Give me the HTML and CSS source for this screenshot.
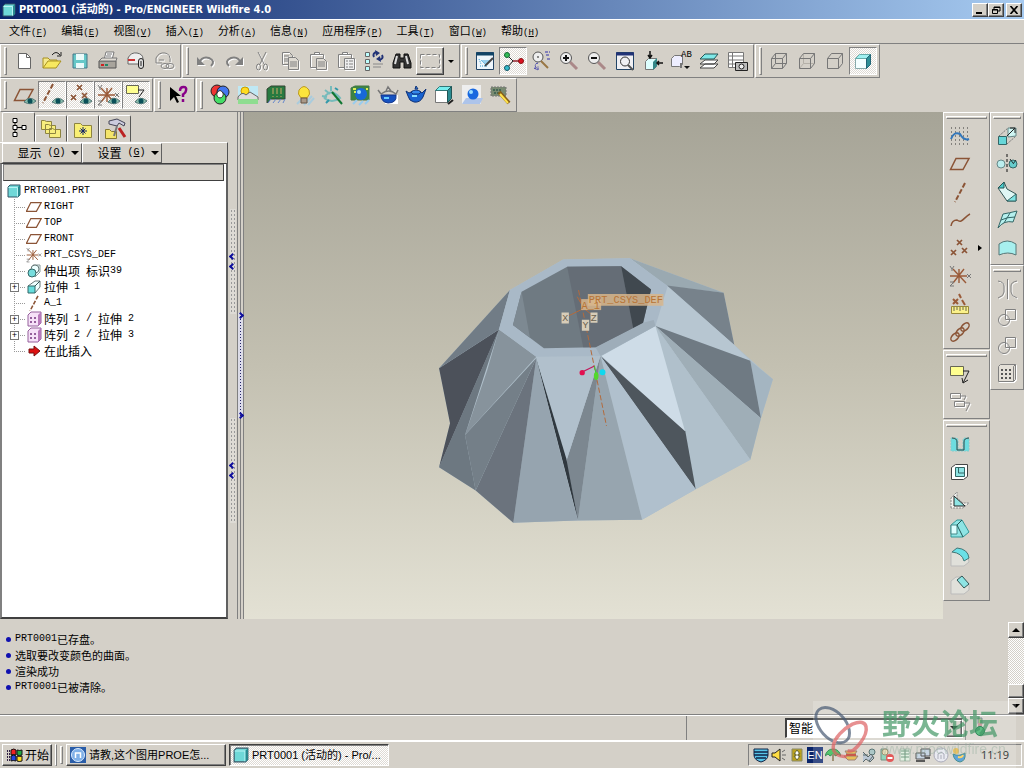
FILE: index.html
```html
<!DOCTYPE html>
<html lang="zh-CN">
<head>
<meta charset="utf-8">
<title>PRT0001 (活动的) - Pro/ENGINEER Wildfire 4.0</title>
<link rel="stylesheet" href="styles.css">
</head>
<body>
<svg class="sprite" aria-hidden="true">
  <symbol id="part" viewBox="0 0 14 14"><path d="M1 3l2-2h10v10l-2 2H1z" fill="#6fd8d8" stroke="#356" /><path d="M1.500 3.500h9v9" fill="none" stroke="#b8f4f4"/><path d="M11 3l2-2v10l-2 2z" fill="#288a90"/></symbol>
  <symbol id="plane" viewBox="0 0 24 24"><path d="M8 6.500h13l-6 11H2.500z" fill="none" stroke="#8b5436" stroke-width="1.500"/></symbol>
  <symbol id="axis" viewBox="0 0 24 24"><path d="M17 3L7 22" fill="none" stroke="#8b5436" stroke-width="2" stroke-dasharray="5 2"/></symbol>
  <symbol id="points" viewBox="0 0 24 24"><path d="M9 4l5 5m0-5l-5 5M3 14l5 5m0-5l-5 5M14 12l5 5m0-5l-5 5" fill="none" stroke="#8b5436" stroke-width="1.700"/></symbol>
  <symbol id="csys" viewBox="0 0 24 24"><path d="M2 12h17M5 5l13 14M16 5L5 19M11 5v14" fill="none" stroke="#9a5a38" stroke-width="1.400"/><path d="M2 2l2 3 2-3M4 5v2M19 10l4 4m0-4l-4 4M2 18h4l-4 4h4" fill="none" stroke="#777"/></symbol>
  <symbol id="eye" viewBox="0 0 12 8"><path d="M0 5Q5-2 12 4 7 9 0 5z" fill="#8ba" stroke="#577"/><circle cx="6" cy="4" r="2.500" fill="#0a5058"/></symbol>
  <symbol id="pattern" viewBox="0 0 16 16"><path d="M2 4l3-3h10v11l-3 3H2z" fill="#f6e2f8" stroke="#95609c"/><path d="M12 4l3-3v11l-3 3z" fill="#b87abb"/><path d="M5 6v8M9 6v8" stroke="#95609c" stroke-width="2" stroke-dasharray="2 2"/></symbol>
  <symbol id="note" viewBox="0 0 24 24"><path d="M2.500 4.500h13v9h-13z" fill="#ffff90" stroke="#665"/><path d="M15 9h6l-6 12m-1-5l1 5 5-3" fill="none" stroke="#222"/></symbol>
</svg>

<header class="title">
  <svg class="app" viewBox="0 0 14 14"><use href="#part"/></svg>
  <h1>PRT0001 (活动的) - Pro/ENGINEER Wildfire 4.0</h1>
  <div class="winbtns">
    <button aria-label="最小化"><svg viewBox="0 0 10 8"><path d="M1 7h6" stroke="#000" stroke-width="2"/></svg></button>
    <button aria-label="还原"><svg viewBox="0 0 10 8"><path d="M3 3V1h6v4H7M3 1.500h6M1.500 3.500h5v4h-5zM1 4h6" fill="none" stroke="#000"/></svg></button>
    <button class="close" aria-label="关闭"><svg viewBox="0 0 10 8"><path d="M1.500 0l7 8m0-8l-7 8" stroke="#000" stroke-width="1.700"/></svg></button>
  </div>
</header>

<nav class="menu">
  <button>文件<small>(<u>F</u>)</small></button><button>编辑<small>(<u>E</u>)</small></button><button>视图<small>(<u>V</u>)</small></button><button>插入<small>(<u>I</u>)</small></button><button>分析<small>(<u>A</u>)</small></button><button>信息<small>(<u>N</u>)</small></button><button>应用程序<small>(<u>P</u>)</small></button><button>工具<small>(<u>T</u>)</small></button><button>窗口<small>(<u>W</u>)</small></button><button>帮助<small>(<u>H</u>)</small></button>
</nav>

<div class="bar">
  <div class="group">
    <button class="tb" aria-label="新建"><svg viewBox="0 0 24 24"><path d="M6.500 4.500h8l4 4v11h-12z" fill="#fff" stroke="#666"/><path d="M14.500 4.500v4h4" stroke="#666"/></svg></button>
    <button class="tb" aria-label="打开"><svg viewBox="0 0 24 24"><path d="M3 19V9h5l2 2h7v2" fill="#f5e98c" stroke="#a89020"/><path d="M3 19l5-7h13l-5 7z" fill="#f8e860" stroke="#a89020"/><path d="M12 6q4-5 8 0m1-3v4h-4" stroke="#222"/></svg></button>
    <button class="tb" aria-label="保存"><svg viewBox="0 0 24 24"><path d="M5 5h14v14H5z" fill="#66c8c8" stroke="#478"/><path d="M8 5h8v6H8zM8 14h8v5H8z" fill="#eafafa" stroke="none"/></svg></button>
    <button class="tb" aria-label="打印"><svg viewBox="0 0 24 24"><path d="M8 11l2-8h8l-2 8" fill="#fff" stroke="#777"/><path d="M3 12h17v7H3z" fill="#a8a49c" stroke="#555"/><path d="M3 12l3-3h15l-1 3z" fill="#e0dcd4" stroke="#777"/><path d="M11 5h5M10 7h5" stroke="#777"/><path d="M5 16h3" stroke="#c22" stroke-width="2"/><path d="M9 16h3" stroke="#286" stroke-width="2"/></svg></button>
    <button class="tb" aria-label="发送邮件"><svg viewBox="0 0 24 24"><path d="M4 15V9q3-6 9-5 6 1 6 6v5z" fill="#eee" stroke="#666"/><path d="M4 11h7" stroke="#c33" stroke-width="2"/><rect x="14.500" y="9.500" width="5" height="10" rx="2.500" fill="#ddd" stroke="#222"/><path d="M17 12v5" stroke="#222"/></svg></button>
    <button class="tb" aria-label="发送链接"><svg class="gray" viewBox="0 0 24 24"><path d="M4 14V9q3-6 9-5 6 1 5 9M4 14h6M7 11h5"/><ellipse cx="13" cy="17" rx="4" ry="2.500"/><ellipse cx="18" cy="17" rx="4" ry="2.500"/></svg></button>
  </div>
  <div class="group">
    <button class="tb" aria-label="撤消"><svg class="gray" viewBox="0 0 24 24"><path d="M5 14q3-7 10-5 7 3 2 8" stroke-width="2"/><path d="M3 8v8h8z" class="gf"/></svg></button>
    <button class="tb" aria-label="重做"><svg class="gray" viewBox="0 0 24 24"><path d="M19 14q-3-7-10-5-7 3-2 8" stroke-width="2"/><path d="M21 8v8h-8z" class="gf"/></svg></button>
    <button class="tb" aria-label="剪切"><svg class="gray" viewBox="0 0 24 24"><path d="M8 3l6 12M16 3l-6 12"/><ellipse cx="8.500" cy="18" rx="2" ry="3"/><ellipse cx="15.500" cy="18" rx="2" ry="3"/></svg></button>
    <button class="tb" aria-label="复制"><svg class="gray" viewBox="0 0 24 24"><path d="M4.500 3.500h7l3 3v9h-10zM6 7h5M6 10h5M6 12h5"/><path d="M10.500 8.500h7l3 3v9h-10zM12 13h7M12 15h7M12 17h7" fill="#dedad2"/></svg></button>
    <button class="tb" aria-label="粘贴"><svg class="gray" viewBox="0 0 24 24"><path d="M4.500 5.500h13v13h-13zM8.500 5V3.500h5V5"/><path d="M10.500 9.500h7l3 3v8h-10zM12 13h7M12 15h7M12 17h7" fill="#dedad2"/></svg></button>
    <button class="tb" aria-label="选择性粘贴"><svg class="gray" viewBox="0 0 24 24"><path d="M4.500 5.500h13v13h-13zM8.500 5V3.500h5V5"/><path d="M10.500 9.500h10v11h-10zM12 12h2M15 12h4M12 15h2M15 15h4M12 18h2M15 18h4" fill="#eee"/></svg></button>
    <button class="tb" aria-label="再生"><svg viewBox="0 0 24 24"><path d="M3.500 3.500h4v4h-4zM3.500 10.500h4v4h-4zM3.500 17.500h4v4h-4z" fill="#bff" stroke="#666"/><path d="M12 8q-2-4 3-5m5 3q2 4-3 5" stroke="#237" stroke-width="2"/><path d="M13 1l5 3-4 3zM19 13l-5-3 4-3z" fill="#237" stroke="none"/><path d="M11 15h10M11 18h8" stroke="#888"/></svg></button>
    <button class="tb" aria-label="查找"><svg viewBox="0 0 24 24"><path d="M6 5h4v4h4V5h4l3 9v5h-7v-6h-4v6H3v-5z" fill="#333" stroke="#111"/><path d="M7 7l-2 8M16 7l2 8" stroke="#ddd" stroke-width="2"/></svg></button>
    <button class="tb raised" aria-label="选择框"><svg class="gray" viewBox="0 0 24 24"><path d="M2.500 5.500h19v13h-19z" stroke-dasharray="4 2"/></svg></button>
    <button class="drop" aria-label="更多"><i></i></button>
  </div>
  <div class="group">
    <button class="tb" aria-label="重画"><svg viewBox="0 0 24 24"><path d="M3.500 3.500h17v17h-17z" fill="#eef6fc" stroke="#246"/><path d="M3 5h18" stroke="#146" stroke-width="3"/><path d="M8 11l5 5 5-5" fill="#9ad0ee" stroke="#7bd"/><path d="M12 17l8-8" stroke="#444" stroke-width="2"/><path d="M6 10l2 5M7 17h7" stroke="#39c" stroke-dasharray="1 1"/></svg></button>
    <button class="tb on" aria-label="旋转中心"><svg viewBox="0 0 24 24"><path d="M6 6l6 6-6 7M12 12h9" stroke="#222"/><path d="M12 12h9" stroke="#c23"/><circle cx="6" cy="6" r="2.500" fill="#3b5" stroke="#163"/><circle cx="6" cy="19" r="2.500" fill="#3bc" stroke="#156"/><circle cx="20" cy="12" r="2.500" fill="#d12" stroke="#811"/></svg></button>
    <button class="tb" aria-label="定向模式"><svg viewBox="0 0 24 24"><circle cx="9" cy="8" r="5" fill="#eee" stroke="#555"/><path d="M8.500 8h1" stroke="#222" stroke-width="2"/><path d="M12 12l7 7" stroke="#974" stroke-width="2"/><path d="M16 3h5M17 6h4M18 10h3M9 14q-5 1-1 6m-3-1l4 2v-4" stroke="#33a" stroke-dasharray="3 1"/></svg></button>
    <button class="tb" aria-label="放大"><svg viewBox="0 0 24 24"><path d="M13 13l7 7" stroke="#a88" stroke-width="3"/><circle cx="9" cy="9" r="5.500" fill="#eee" stroke="#555"/><path d="M6 9h6M9 6v6" stroke="#111" stroke-width="2"/></svg></button>
    <button class="tb" aria-label="缩小"><svg viewBox="0 0 24 24"><path d="M13 13l7 7" stroke="#a88" stroke-width="3"/><circle cx="9" cy="9" r="5.500" fill="#eee" stroke="#555"/><path d="M6 9h6" stroke="#111" stroke-width="2"/></svg></button>
    <button class="tb" aria-label="重新调整"><svg viewBox="0 0 24 24"><path d="M3.500 3.500h17v17h-17z" fill="#f0f0f4" stroke="#246"/><path d="M3 5h18" stroke="#237" stroke-width="3"/><circle cx="12" cy="12.500" r="4.500" stroke="#333"/><path d="M15 16l5 5" stroke="#555" stroke-width="2"/></svg></button>
    <button class="tb" aria-label="重定向"><svg viewBox="0 0 24 24"><path d="M4.500 12.500l3-3h8v8l-3 3h-8z" fill="#dff" stroke="#777"/><path d="M12 13l4-4v8l-4 4z" fill="#388"/><path d="M9 2v6M7 6l2 3 2-3M22 14h-6m2-2l-2 2 2 2" stroke="#111" stroke-width="1.500"/></svg></button>
    <button class="tb" aria-label="命名视图"><svg viewBox="0 0 24 24"><path d="M2.500 9.500l3-3h8v9l-3 2h-8z" fill="#eef" stroke="#777"/><text x="12" y="8" class="ab">AB</text><path d="M12 14v5" stroke="#777" stroke-width="2"/><path d="M15 17h6l-3 3z" fill="#111" stroke="none"/></svg></button>
    <button class="tb" aria-label="图层"><svg viewBox="0 0 24 24"><path d="M3 19l5-4h13l-4 4zM3 15l5-4h13l-4 4z" fill="#fff" stroke="#444"/><path d="M3 10l5-5h13l-4 5z" fill="#7fe8e8" stroke="#255"/></svg></button>
    <button class="tb" aria-label="视图管理器"><svg viewBox="0 0 24 24"><path d="M3.500 3.500h15v15h-15zM3.500 7h15M3.500 11h15M3.500 15h15M7.500 3v15" fill="#fff" stroke="#777"/><path d="M10.500 13.500h12v8h-12z" fill="#bbb" stroke="#222"/><circle cx="16.500" cy="17.500" r="2.500" fill="#eee" stroke="#222"/></svg></button>
  </div>
  <div class="group">
    <button class="tb" aria-label="线框"><svg viewBox="0 0 24 24"><path d="M4.500 9.500h11v10h-11zM8.500 4.500h11v10h-11zM4.500 9.500l4-5M15.500 9.500l4-5M15.500 19.500l4-5M4.500 19.500l4-5" stroke="#777"/></svg></button>
    <button class="tb" aria-label="隐藏线"><svg viewBox="0 0 24 24"><path d="M8.500 5v9.500h11M4.500 19.500l4-5" stroke="#b4b0a8"/><path d="M4.500 9.500h11v10h-11zM4.500 9.500l4-5h11v10l-4 5M15.500 9.500l4-5" stroke="#777"/></svg></button>
    <button class="tb" aria-label="无隐藏线"><svg viewBox="0 0 24 24"><path d="M4.500 9.500h11v10h-11zM4.500 9.500l4-5h11v10l-4 5M15.500 9.500l4-5" stroke="#777"/></svg></button>
    <button class="tb on" aria-label="着色"><svg viewBox="0 0 24 24"><path d="M4.500 9.500h11v10h-11z" fill="#f4ffff" stroke="#8aa"/><path d="M4.500 9.500l4-4h11l-4 4z" fill="#9ff0f0" stroke="#6aa"/><path d="M15.500 9.500l4-4v10l-4 4z" fill="#2f8f96" stroke="#267"/></svg></button>
  </div>
</div>

<div class="bar">
  <div class="group">
    <button class="tb" aria-label="基准平面显示"><svg viewBox="0 0 24 24"><use href="#plane"/><use href="#eye" x="12" y="14" width="12" height="8"/></svg></button>
    <button class="tb on" aria-label="基准轴显示"><svg viewBox="0 0 24 24"><use href="#axis" x="-4" y="-2" width="24" height="24"/><use href="#eye" x="12" y="14" width="12" height="8"/></svg></button>
    <button class="tb on" aria-label="基准点显示"><svg viewBox="0 0 24 24"><use href="#points" y="-2" width="24" height="24"/><use href="#eye" x="12" y="14" width="12" height="8"/></svg></button>
    <button class="tb on" aria-label="坐标系显示"><svg viewBox="0 0 24 24"><use href="#csys" width="24" height="24"/><use href="#eye" x="12" y="14" width="12" height="8"/></svg></button>
    <button class="tb on" aria-label="注释显示"><svg viewBox="0 0 24 24"><path d="M2.500 2.500h12v8h-12z" fill="#ffff90" stroke="#665"/><path d="M14 7h6l-5 7" stroke="#222"/><use href="#eye" x="11" y="14" width="12" height="8"/></svg></button>
  </div>
  <div class="group">
    <button class="tb" aria-label="上下文帮助"><svg viewBox="0 0 24 24"><path d="M4 4v14l4-4 3 6 2-1-3-6h5z" fill="#000" stroke="none"/><path d="M14 8q0-4 3.500-4T20 7.500q0 2-3 4V14m0 2v3" stroke="#808" stroke-width="2.500"/></svg></button>
  </div>
  <div class="group">
    <button class="tb" aria-label="颜色和外观"><svg viewBox="0 0 24 24"><circle cx="9" cy="8" r="6" fill="#e33" stroke="#222"/><circle cx="15" cy="9" r="6" fill="#47e" stroke="#222"/><circle cx="12" cy="15" r="6" fill="#4d6" stroke="#222"/><path d="M9 10q3-5 6 0 1 4-3 5-4-1-3-5z" fill="#fff" stroke="#333"/></svg></button>
    <button class="tb" aria-label="场景"><svg viewBox="0 0 24 24"><path d="M2 3h20v18H2z" fill="#bfe8f4" stroke="none"/><circle cx="9" cy="8" r="4" fill="#fd2" stroke="#c90"/><path d="M2 14q4-6 8-2l4-3 8 5v3H2z" fill="#ddd" stroke="#666"/><path d="M2 16h20v5H2z" fill="#8fdd90" stroke="none"/></svg></button>
    <button class="tb" aria-label="房间"><svg viewBox="0 0 24 24"><path d="M3 6l4-3h14v13H7l-4 4z" fill="#287a40" stroke="#343"/><path d="M9 5v9M13 5v9M17 5v9M8 8h12" stroke="#ca6" stroke-dasharray="2 2"/><path d="M4 20l3-4M9 20l3-4M14 20l3-4M19 20l2-4" stroke="#68c"/></svg></button>
    <button class="tb" aria-label="光源"><svg viewBox="0 0 24 24"><path d="M12 22l8-9M16 22l6-7M5 21l5-5" stroke="#acd" stroke-width="2"/><path d="M9 15q-4-4-2-8 5-7 10 0 2 4-2 8z" fill="#fbe53c" stroke="#b92"/><path d="M9 15h6v5H9z" fill="#a98" stroke="#654"/></svg></button>
    <button class="tb" aria-label="效果"><svg viewBox="0 0 24 24"><path d="M4 15q7-11 16 0-8 6-16 0M5 7l5 4M11 3v5M2 13l5 1" stroke="#7bb" stroke-width="2"/><path d="M12 9l10 12" stroke="#173" stroke-width="2"/><path d="M15 5l3 2M6 20l3-3" stroke="#39a" stroke-width="2"/></svg></button>
    <button class="tb" aria-label="渲染房间"><svg viewBox="0 0 24 24"><path d="M3 5l4-2h14v14H3z" fill="#3c8444" stroke="#474"/><path d="M5 21l4-4M11 22l4-4M17 21l4-4" stroke="#9ce" stroke-width="2"/><circle cx="13" cy="11" r="6" fill="#1868d8" stroke="none"/><circle cx="11" cy="9" r="2" fill="#9df" stroke="none"/><path d="M5 6h3M6 9h2M18 6h2" stroke="#de5" stroke-width="2"/></svg></button>
    <button class="tb" aria-label="渲染设置"><svg viewBox="0 0 24 24"><path d="M9 12h13v9H9z" fill="#fff" stroke="none"/><path d="M5 11q8-6 15 0l2-4M5 11l-3-4M10 8l2-4 3 4" fill="#e4e0da" stroke="#777" stroke-width="1.500"/><path d="M5 12h15q1 8-8 8-7-1-7-8z" fill="#1551c0" stroke="#138"/><path d="M8 15h5" stroke="#6cf" stroke-width="2"/></svg></button>
    <button class="tb" aria-label="渲染窗口"><svg viewBox="0 0 24 24"><path d="M5 10q8-5 13 0l4-4-3 8q-3 6-9 5-5-1-6-6L2 8z" fill="#1862d0" stroke="#137"/><path d="M7 9q5-4 10 0l-2 2H9z" fill="#38e" stroke="#137"/><path d="M11 6l1-3 2 3z" fill="#38e" stroke="#137"/><path d="M8 13h5" stroke="#8df" stroke-width="2"/></svg></button>
    <button class="tb" aria-label="模型编辑"><svg viewBox="0 0 24 24"><path d="M3.500 7.500h12v12h-12z" fill="#fff" stroke="#777"/><path d="M3.500 7.500l4-4h12l-4 4z" fill="#7ee" stroke="#377"/><path d="M15.500 7.500l4-4v12l-4 4z" fill="#2b8b90" stroke="#255"/><path d="M16 21l5-4" stroke="#222" stroke-width="2"/></svg></button>
    <button class="tb" aria-label="透视图"><svg viewBox="0 0 24 24"><path d="M2 2h19v19H2z" fill="#eee" stroke="none"/><path d="M2 21l4-6h17l-3 6z" fill="#adc4ea" stroke="none"/><circle cx="13" cy="11" r="5.500" fill="#1868e0" stroke="none"/><circle cx="11" cy="9" r="2" fill="#9df" stroke="none"/></svg></button>
    <button class="tb" aria-label="照片渲染"><svg viewBox="0 0 24 24"><path d="M3 4h15v9H3z" fill="#788a70" stroke="#777" stroke-dasharray="2 1"/><path d="M5 7h9M6 10h9" stroke="#465" stroke-width="2" stroke-dasharray="2 1"/><path d="M11 9l10 11" stroke="#876018" stroke-width="4"/><path d="M12 11l8 9" stroke="#ffe34c" stroke-width="2"/></svg></button>
  </div>
</div>

<main class="work">
  <aside class="nav">
    <div class="tabs">
      <button class="tab sel" aria-label="模型树"><svg viewBox="0 0 24 24"><path d="M6 3.500h4v4H6zM6 10.500h4v4H6zM15 10.500h4v4h-4zM6 17.500h4v4H6z" fill="#fff" stroke="#000"/><path d="M8 7.500v3m0 4v3M10 12.500h5" stroke="#000"/></svg></button>
      <button class="tab" aria-label="文件夹浏览器"><svg viewBox="0 0 24 24"><path d="M2.500 3.500h3l2 1h5v8h-10zM6.500 7.500h3l2 1h5v8h-10zM10.500 11.500h3l2 1h6v8h-11z" fill="#f7ee7d" stroke="#8d8440"/></svg></button>
      <button class="tab" aria-label="收藏夹"><svg viewBox="0 0 24 24"><path d="M3.500 6.500h6l2 2h9v12h-17z" fill="#f9ef74" stroke="#8d8440"/><path d="M12 10v8M8 14h8M9.500 11.500l5 5m0-5l-5 5" stroke="#126"/></svg></button>
      <button class="tab" aria-label="连接"><svg viewBox="0 0 24 24"><path d="M2.500 12.500h4l2 2h5v7h-11z" fill="#f4e56b" stroke="#887a30"/><path d="M6 4l8-2 8 4-1 3-5-3-2 3-8-2z" fill="#ccd" stroke="#445"/><path d="M14 9l-3 10" stroke="#777" stroke-width="2"/><path d="M16 11l6 9" stroke="#b22" stroke-width="3"/></svg></button>
    </div>
    <div class="opts">
      <button>显示<small> (<u>O</u>)</small><i></i></button><button>设置<small> (<u>G</u>)</small><i></i></button>
    </div>
    <div class="treebox">
      <div class="treehead"></div>
      <div class="tree">
        <div class="root"><svg viewBox="0 0 14 14"><use href="#part"/></svg><small>PRT0001.PRT</small></div>
        <ul>
          <li><svg viewBox="2 2 20 20"><use href="#plane" width="24" height="24"/></svg><small>RIGHT</small></li>
          <li><svg viewBox="2 2 20 20"><use href="#plane" width="24" height="24"/></svg><small>TOP</small></li>
          <li><svg viewBox="2 2 20 20"><use href="#plane" width="24" height="24"/></svg><small>FRONT</small></li>
          <li><svg viewBox="1 1 23 22"><use href="#csys" width="24" height="24"/></svg><small>PRT_CSYS_DEF</small></li>
          <li><svg viewBox="0 0 16 16"><path d="M7 2h7v7l-5 5" fill="#eff" stroke="#899"/><circle cx="9" cy="6" r="4" fill="#eff" stroke="#677"/><circle cx="6" cy="10" r="4" fill="#7dd" stroke="#366"/></svg>伸出项<small> </small>标识<small>39</small></li>
          <li><button class="exp" aria-label="展开">+</button><svg viewBox="0 0 16 16"><path d="M2 7l7-5h5v6l-5 6" fill="#eff" stroke="#677"/><path d="M9 7l5-5" stroke="#355"/><path d="M2 7h7v7H2z" fill="#6dd" stroke="#366"/></svg>拉伸<small> 1</small></li>
          <li><svg viewBox="2 2 20 20"><use href="#axis" width="24" height="24"/></svg><small>A_1</small></li>
          <li><button class="exp" aria-label="展开">+</button><svg viewBox="0 0 16 16"><use href="#pattern"/></svg>阵列<small> 1 / </small>拉伸<small> 2</small></li>
          <li><button class="exp" aria-label="展开">+</button><svg viewBox="0 0 16 16"><use href="#pattern"/></svg>阵列<small> 2 / </small>拉伸<small> 3</small></li>
          <li><svg viewBox="0 0 16 16"><path d="M3 6h5V3l6 5-6 5v-3H3z" fill="#d11" stroke="#711"/></svg>在此插入</li>
        </ul>
      </div>
    </div>
  </aside>
  <div class="sash">
    <div class="grab"><b></b><b></b></div>
    <div class="grab"><b></b><b></b></div>
  </div>
  <div class="split"><div class="pull"><b></b><b></b></div></div>

  <section class="view">
    <svg viewBox="-531 -384 2100 1521" role="img" aria-label="PRT0001">
      <path fill="#b0c0cb" d="M428 58L628 54 910 158 942 315 1058 418 1022 535 990 660 826 748 665 840 472 842 278 849 165 752 55 682 88 550 55 385 268 150z"/>
      <path fill="#9aa9b1" d="M628 54L910 158 735 138z"/>
      <path fill="#77828b" d="M740 136L910 158 942 315z"/>
      <path fill="#b7c6d1" d="M628 54L740 138 942 315 990 362 705 258 715 150z"/>
      <path fill="#a4b5c1" d="M990 362L1058 418 1022 535z"/>
      <path fill="#6f7a83" d="M705 258L990 362 1022 535z"/>
      <path fill="#9faeb7" d="M705 258L1022 535 990 660z"/>
      <path fill="#b0c0cb" d="M705 258L990 660 826 748 795 578z"/>
      <path fill="#cedce7" d="M543 348L705 258 795 578z"/>
      <path fill="#4e565d" d="M540 348L795 575 826 748z"/>
      <path fill="#b0c0cd" d="M540 348L826 748 665 840z"/>
      <path fill="#97a5af" d="M540 348L665 840 472 842z"/>
      <path fill="#7c8790" d="M540 348L437 665 472 842z"/>
      <path fill="#b1c0cc" d="M347 350L540 348 437 665z"/>
      <path fill="#30383f" d="M345 350L437 655 472 840z"/>
      <path fill="#96a4af" d="M347 355L410 605 472 842 278 849z"/>
      <path fill="#6b737d" d="M347 355L278 849 165 752z"/>
      <path fill="#747f88" d="M347 355L165 752 133 585z"/>
      <path fill="#87939c" d="M235 268L347 350 133 585 200 390z"/>
      <path fill="#6d7881" d="M235 268L133 585 165 752 55 682z"/>
      <path fill="#4c515a" d="M235 268L55 385 88 550 55 682z"/>
      <path fill="#717c86" d="M268 150L235 268 55 385z"/>
      <path fill="#a9b9c7" d="M428 58L628 54 742 138 705 258 540 348 347 350 235 268 268 150z"/>
      <path fill="#9eadb9" d="M540 348L705 258 700 240 668 248 525 322z"/>
      <path fill="#6f7a82" d="M440 80L602 78 692 148 668 248 525 322 370 325 277 255 303 155z"/>
      <path fill="#7d8992" d="M303 155L277 255 328 293z"/>
      <path fill="#656d76" d="M440 80L602 78 638 264 525 322 488 322z"/>
      <path fill="#40484f" d="M602 78L692 148 668 248 638 264z"/>
      <g fill="none" stroke="#b36a3c" stroke-width="3"><path stroke-dasharray="16 7" d="M474 150L558 558"/><path d="M470 170l20 35-45 22m45-22l28 22"/></g>
      <path fill="#d8b68c" fill-opacity=".85" d="M502 162h227v35H502z"/><path fill="#d8b68c" fill-opacity=".85" d="M482 177h60v33h-60z"/>
      <path fill="#d8cdb8" d="M423 217h22v33h-22zM510 217h21v31h-21zM484 239h22v33h-22z"/>
      <g class="tags"><text x="505" y="190">PRT_CSYS_DEF</text><text x="483" y="206">A_1</text></g>
      <g class="tags dark"><text x="425" y="243">X</text><text x="511" y="242">Z</text><text x="486" y="265">Y</text></g>
      <path d="M485 396l37-18" stroke="#c2185b" stroke-width="4"/><circle cx="485" cy="398" r="8" fill="#e20f50"/>
      <path d="M522 378l6 30" stroke="#3c3" stroke-width="3"/><ellipse cx="527" cy="408" rx="7" ry="12" fill="#52d82c"/>
      <circle cx="546" cy="397" r="9" fill="#10d8ee"/>
    </svg>
  </section>

  <div class="side">
    <div class="vgroup">
      <button class="tb" aria-label="草绘"><svg viewBox="0 0 24 24"><path d="M3 4h19M3 8h19M3 12h19M3 16h19M3 20h19" stroke="#333" stroke-dasharray="1 3"/><path d="M3 15q3-8 9-5 4 7 9 5" stroke="#37b" stroke-width="2"/></svg></button>
      <button class="tb" aria-label="平面"><svg viewBox="0 0 24 24"><use href="#plane"/></svg></button>
      <button class="tb" aria-label="轴"><svg viewBox="0 0 24 24"><use href="#axis"/></svg></button>
      <button class="tb" aria-label="曲线"><svg viewBox="0 0 24 24"><path d="M3 18q1-6 6-6c5 4 7-3 13-6" stroke="#8b5436" stroke-width="1.500"/></svg></button>
      <div class="pair"><button class="tb" aria-label="点"><svg viewBox="0 0 24 24"><use href="#points"/></svg></button><button class="fly" aria-label="更多"><i></i></button></div>
      <button class="tb" aria-label="坐标系"><svg viewBox="0 0 24 24"><use href="#csys"/></svg></button>
      <button class="tb" aria-label="分析"><svg viewBox="0 0 24 24"><path d="M5 7l5 5m0-5l-5 5M11 2l2 4m1 2l3 5" stroke="#9a5a38" stroke-width="2"/><path d="M3.500 14.500h17v7h-17z" fill="#fbf18a" stroke="#98893a"/><path d="M6 15v4M9 15v3M12 15v4M15 15v3M18 15v4" stroke="#665"/></svg></button>
      <button class="tb" aria-label="参照"><svg viewBox="0 0 24 24"><g stroke="#8b5436" stroke-width="1.500"><ellipse cx="7" cy="17" rx="5" ry="3" transform="rotate(-45 7 17)"/><ellipse cx="12" cy="12" rx="5" ry="3" transform="rotate(-45 12 12)"/><ellipse cx="17" cy="7" rx="5" ry="3" transform="rotate(-45 17 7)"/></g></svg></button>
    </div>
    <div class="vgroup">
      <button class="tb" aria-label="注释特征"><svg viewBox="0 0 24 24"><use href="#note"/></svg></button>
      <button class="tb" aria-label="传播注释"><svg class="gray" viewBox="0 0 24 24"><path d="M2.500 3.500h10v5h-10zM6.500 11.500h10v5h-10zM12 6h6l-2 4M17 13h5l-4 8"/></svg></button>
    </div>
    <div class="vgroup">
      <button class="tb" aria-label="孔"><svg viewBox="0 0 24 24"><path d="M3 6h5q2 0 2 3v8h5V9q0-3 2-3h4v13H3z" fill="#6ddde0" stroke="#8cc" stroke-dasharray="2 1"/><path d="M4 6q5 0 5 4v8h7v-8q0-4 5-4" stroke="#344"/></svg></button>
      <button class="tb" aria-label="壳"><svg viewBox="0 0 24 24"><path d="M3.500 7.500l4-3h12v12l-4 3h-12z" fill="#fff" stroke="#444"/><path d="M7.500 7.500h9v9h-9z" fill="#8ee4e4" stroke="#366"/><path d="M10.500 7v6h6" stroke="#366"/></svg></button>
      <button class="tb" aria-label="筋"><svg viewBox="0 0 24 24"><path d="M3 20V10l6-6v6l6 5h6l-6 5z" fill="#f4f4f0" stroke="#888" stroke-dasharray="2 1"/><path d="M6 8v10h11z" fill="#8ee4e4" stroke="#222"/></svg></button>
      <button class="tb" aria-label="拔模"><svg viewBox="0 0 24 24"><path d="M3 9l6-5h5l7 12-6 5H3z" fill="#8ee4e4" stroke="#399"/><path d="M3 9h6v9H3z" fill="#dff" stroke="#488"/><path d="M14 4l-5 5 6 12" stroke="#255"/></svg></button>
      <button class="tb" aria-label="倒圆角"><svg viewBox="0 0 24 24"><path d="M3 9l5-4q12 0 13 13l-5 4H3z" fill="#e0e0da" stroke="#bbb"/><path d="M4 8l5-4q11 1 12 10l-5 3Q14 9 4 8z" fill="#6be0e6" stroke="#477"/></svg></button>
      <button class="tb" aria-label="倒角"><svg viewBox="0 0 24 24"><path d="M3 9l5-4h6l7 7v6l-5 4H3z" fill="#e0e0da" stroke="#bbb"/><path d="M9 8l5-4 7 8-5 4z" fill="#8ee4e4" stroke="#355"/></svg></button>
    </div>
  </div>
  <div class="side narrow">
    <div class="vgroup">
      <button class="tb" aria-label="拉伸"><svg viewBox="0 0 24 24"><path d="M4 12l9-8M12 20l9-8" stroke="#777" stroke-dasharray="2 1"/><path d="M13 4h8v8l-8 1z" fill="#cff5f2" stroke="#688"/><path d="M12 12l8-8m-5 0h5v5" stroke="#222"/><path d="M3.500 12.500h8v8h-8z" fill="#67d6d8" stroke="#366"/></svg></button>
      <button class="tb" aria-label="旋转"><svg viewBox="0 0 24 24"><circle cx="6" cy="12" r="4" fill="#bee" stroke="#688"/><circle cx="18" cy="12" r="4" fill="#6cc" stroke="#366"/><path d="M12 2v20" stroke="#111" stroke-dasharray="3 2"/><path d="M15 7l3 4M21 8l-3 4" stroke="#233"/></svg></button>
      <button class="tb" aria-label="可变截面扫描"><svg viewBox="0 0 24 24"><path d="M3 8l6-6 3 7 9 5v7h-9z" fill="#dff7f5" stroke="#355"/><path d="M3 8l6-6v6z" fill="#4ccccc" stroke="#255"/><path d="M12 21l9-7v7z" fill="#7fe4e4" stroke="#366"/></svg></button>
      <button class="tb" aria-label="边界混合"><svg viewBox="0 0 24 24"><path d="M8 6q6-1 14-3l-4 11Q9 12 3 20z" fill="#b5f0ee" stroke="#366"/><path d="M15 5L9 15M6 12q6-3 14-3" stroke="#366"/></svg></button>
      <button class="tb" aria-label="造型"><svg viewBox="0 0 24 24"><path d="M4 8q8-6 17 0v11q-8-4-17 0z" fill="#a7efee" stroke="#577"/></svg></button>
    </div>
    <div class="vgroup">
      <button class="tb" aria-label="镜像"><svg class="gray" viewBox="0 0 24 24"><path d="M12.500 2v20M3 4q6 1 6 5v6q0 4-6 6M22 4q-6 1-6 5v6q0 4 6 6"/></svg></button>
      <button class="tb" aria-label="合并"><svg class="gray" viewBox="0 0 24 24"><circle cx="9" cy="15" r="5.500"/><path d="M10.500 4.500h10v10h-10z"/></svg></button>
      <button class="tb" aria-label="修剪"><svg class="gray" viewBox="0 0 24 24"><circle cx="9" cy="15" r="5.500"/><path d="M10.500 4.500h10v10h-10z"/></svg></button>
      <button class="tb" aria-label="阵列"><svg class="gray" viewBox="0 0 24 24"><path d="M3.500 5.500l2-2h15v15l-2 2h-15zM18.500 5.500v15M18.500 5.500l2-2" fill="#e4e0d8"/><path d="M7 8v10M11 8v10M15 8v10" stroke="#555" stroke-width="2" stroke-dasharray="2 2"/></svg></button>
    </div>
  </div>
</main>

<section class="log">
  <ul>
    <li><small>PRT0001</small>已存盘。</li>
    <li>选取要改变颜色的曲面。</li>
    <li>渲染成功</li>
    <li><small>PRT0001</small>已被清除。</li>
  </ul>
  <div class="scroll"><button class="up" aria-label="向上"><i></i></button><div class="track"><div class="thumb"></div></div><button class="down" aria-label="向下"><i></i></button></div>
</section>

<div class="status">
  <div class="info"></div>
  <div class="filter"><select aria-label="选取过滤器"><option>智能</option></select><span class="arrow"><i></i></span></div>
  <div class="state"><svg viewBox="0 0 12 22"><path d="M4 2h4v5l-1 4H5L4 7z" fill="#8cba70" stroke="#678"/><path d="M4 7h4v3H4z" fill="#b88"/><circle cx="6" cy="15" r="4.500" fill="#3aaf67" stroke="#063"/></svg></div>
</div>

<footer class="taskbar">
  <button class="start"><svg viewBox="0 0 18 16"><path d="M5 3q3-2 5 0v5q-3-1-5 0z" fill="#e22" stroke="#111"/><path d="M11 3q3 1 5 0v5q-3 1-5 0z" fill="#2a4" stroke="#111"/><path d="M5 9q3-2 5 0v5q-3-1-5 0z" fill="#24d" stroke="#111"/><path d="M11 9q3 1 5 0v5q-3 1-5 0z" fill="#fd2" stroke="#111"/><path d="M1 4h3M1 7h3M1 10h3M1 13h3" stroke="#324" stroke-width="2" stroke-dasharray="1 1"/></svg>开始</button>
  <span class="sep"></span><span class="sep wide"></span>
  <button class="task"><svg viewBox="0 0 16 16"><path d="M0 0h16v16H0z" fill="#2a5da8"/><circle cx="8" cy="8" r="6.500" fill="#7fb0e8" stroke="#dcecff"/><path d="M5.500 11V6h5v5" fill="none" stroke="#fff" stroke-width="1.500"/></svg><span>请教,这个图用PROE怎...</span></button>
  <button class="task cur"><svg viewBox="0 0 14 14"><use href="#part"/></svg><span>PRT0001 (活动的) - Pro/...</span></button>
  <div class="tray">
    <svg viewBox="0 0 16 16"><path d="M1 2h14v6q0 5-7 7-7-2-7-7z" fill="#57c4e8" stroke="#124"/><path d="M1 5h14M1 8h14M3 11h10" stroke="#124" stroke-width="1.500"/></svg>
    <svg viewBox="0 0 16 16"><path d="M1 6h3l5-4v12l-5-4H1z" fill="#fd4" stroke="#222"/><path d="M11 5l3-2M11 8h4M11 11l3 2" stroke="#666"/></svg>
    <svg viewBox="0 0 16 16"><path d="M3 2h10v12H3z" fill="#bba21c" stroke="#886"/><path d="M8 3l3 4H9v2h2l-3 4-3-4h2V7H5z" fill="#fff" stroke="#663"/></svg>
    <span class="lang">EN</span>
    <svg viewBox="0 0 16 16"><path d="M0 9q2-7 8-7t8 7l-3-2-2 2-3-2-3 2-2-2z" fill="#2db84c" stroke="#173"/><path d="M8 7v7" stroke="#875" stroke-width="2"/></svg>
    <svg viewBox="0 0 16 16"><path d="M2 4h12l-2 3H4zM1 9l4 4h7l3-4z" fill="#e2b032" stroke="#865"/><path d="M3 8h10" stroke="#b32" stroke-width="2"/></svg>
    <svg viewBox="0 0 16 16"><circle cx="11" cy="5" r="3" fill="#9bb" stroke="#355"/><path d="M2 5l5 5 3-3 3 4-4 4-4-3-3 3M2 8h5M12 9l-4 5" fill="#abc" stroke="#344"/></svg>
    <svg viewBox="0 0 16 16"><path d="M2 2h6v11H2z" fill="#7ca" stroke="#576"/><circle cx="6" cy="5" r="3" fill="#eda" stroke="#875"/><circle cx="11" cy="11" r="4" fill="#d33"/><path d="M8.500 11h5" stroke="#fff" stroke-width="2"/></svg>
    <svg viewBox="0 0 16 16"><path d="M3 2h10v12H3z" fill="#ded" stroke="#9a9"/><path d="M4 4h8M4 7h8M4 10h8M8 2v12" stroke="#586"/></svg>
    <svg viewBox="0 0 16 16"><path d="M6 2h9v7H6zM1 6h9v6H1z" fill="#bcd" stroke="#333"/><path d="M1 14h9M10 11h5" stroke="#333" stroke-width="2"/></svg>
    <svg viewBox="0 0 16 16"><circle cx="8" cy="8" r="7" fill="#e4e6ee" stroke="#99a"/><path d="M5 12V7l3-2 3 2v5M8 8v4" fill="none" stroke="#99a"/></svg>
    <svg viewBox="0 0 16 16"><circle cx="5" cy="4" r="3" fill="#e9b43a"/><path d="M2 7q6 3 12-1 1 8-5 9-6-1-7-8z" fill="#3b8fd0" stroke="#277"/><path d="M7 10q4 1 5-2" stroke="#fc4" stroke-width="2" fill="none"/></svg>
    <time>11:19</time>
  </div>
</footer>

<div class="mark">
  <svg viewBox="0 0 70 66"><ellipse cx="20" cy="24" rx="21" ry="13" transform="rotate(48 20 24)" fill="none" stroke="#53647c" stroke-width="3"/><path d="M34 56C12 56 19 34 40 23c17-7 17 7 8 19-6 8-9 9-13 8" fill="none" stroke="#e06b6d" stroke-width="3.500"/></svg>
  <div><strong>野火论坛</strong><span>www.proewildfire.cn</span></div>
</div>
</body>
</html>
```
FILE: styles.css
```css
*, *::before { box-sizing: border-box; }
html, body { height: 100%; }
body {
  margin: 0;
  display: flex;
  flex-direction: column;
  overflow: hidden;
  background: #d4d0c8;
  color: #000;
  font: 12px/16px "Noto Sans CJK SC", sans-serif;
}
button { margin: 0; padding: 0; border: 0; background: none; color: inherit; font: inherit; }
ul { list-style: none; margin: 0; padding: 0; }
svg { display: block; flex: none; }
small { font: 10px/16px "Liberation Mono", monospace; white-space: pre; }
i { display: block; border: 4px solid transparent; border-top-color: #000; border-bottom: 0; }
.sprite { position: absolute; width: 0; height: 0; }

.title {
  flex: none;
  display: flex;
  align-items: center;
  height: 19px;
  padding: 0 2px;
  background: linear-gradient(90deg, #0a246a, #a6caf0);
  color: #fff;
}
.title .app { width: 14px; height: 14px; }
h1 { flex: 1; margin: 0 0 0 3px; font: bold 11px/18px "DejaVu Sans Condensed", "DejaVu Sans", "Noto Sans CJK SC", sans-serif; white-space: nowrap; }
.winbtns { display: flex; }
.winbtns button { width: 16px; height: 14px; display: grid; place-items: center; }
.winbtns .close { margin-left: 2px; }
.winbtns svg { width: 10px; height: 8px; }
.winbtns button, .raised, .scroll button, .thumb, .arrow, .start, .task {
  background: #d4d0c8;
  border: 1px solid;
  border-color: #fff #404040 #404040 #fff;
  box-shadow: inset -1px -1px #808080;
}

.menu {
  flex: none;
  display: flex;
  height: 25px;
  padding-left: 2px;
  border-top: 1px solid #fff;
  border-bottom: 1px solid #808080;
  font-size: 11px;
}
.menu button { padding: 0 7px; white-space: nowrap; }
.menu small { font-size: 9px; }

.bar { flex: none; display: flex; gap: 1px; height: 34px; }
.group {
  display: flex;
  align-items: center;
  padding-right: 2px;
  border: 1px solid;
  border-color: #fff #808080 #808080 #fff;
}
.group::before { content: ""; width: 3px; height: 28px; margin: 0 3px; border: 1px solid; border-color: #fff #808080 #808080 #fff; }
.tb { flex: none; width: 28px; height: 28px; display: grid; place-items: center; border: 1px solid transparent; }
.tb svg, .tab svg { width: 24px; height: 24px; fill: none; stroke: none; }
.tb .gray { stroke: #808080; filter: drop-shadow(1px 1px 0 #fff); }
.gray .gf { fill: #808080; stroke: none; }
.ab { font: 9px "Liberation Mono", monospace; fill: #000; stroke: none; }
.raised { border-color: #fff #404040 #404040 #fff; }
.on {
  background: repeating-conic-gradient(#fff 0 25%, #dedad4 0 50%) 0 0 / 2px 2px;
  border-color: #808080 #fff #fff #808080;
}
.drop { display: grid; place-items: center; width: 13px; height: 28px; }
.drop i { border-width: 3px 3px 0; }

.work { flex: 1; display: flex; min-height: 0; }
.nav { flex: none; width: 228px; display: flex; flex-direction: column; }
.tabs { display: flex; height: 30px; padding-left: 2px; align-items: flex-end; }
.tab { width: 32px; height: 27px; display: grid; place-items: center; border: 1px solid; border-color: #fff #555 transparent #fff; border-radius: 2px 2px 0 0; }
.tab.sel { height: 30px; width: 33px; border-top-color: #fff; }
.opts { display: flex; height: 21px; padding-left: 2px; border-top: 1px solid #fff; border-right: 1px solid #555; }
.opts button { display: flex; align-items: center; justify-content: center; width: 80px; padding-left: 12px; border: 1px solid; border-color: #fff #606060 #606060 #fff; }
.opts i { margin-left: 5px; }
.treebox { flex: 1; display: flex; flex-direction: column; padding: 0 1px 1px; background: #fff; border: 2px solid #404040; border-width: 1px 2px 2px; border-right-color: #606060; border-left-color: #808080; }
.treehead { height: 17px; margin-right: 1px; background: #d4d0c8; border: 1px solid; border-color: #808080 #404040 #404040 #808080; }
.tree { flex: 1; padding-top: 2px; }
.tree li, .root { display: flex; align-items: center; height: 16px; white-space: pre; }
.root { padding-left: 4px; }
.root svg { width: 14px; height: 14px; margin-right: 3px; }
.tree ul { margin-left: 11px; background: repeating-linear-gradient(#999 0 1px, #fff 1px 2px) 0 0 / 1px 152px no-repeat; }
.tree li { position: relative; background: repeating-linear-gradient(90deg, #999 0 1px, transparent 1px 2px) 0 8px / 11px 1px no-repeat; padding-left: 12px; }
.tree li svg { width: 16px; height: 16px; margin-right: 2px; fill: none; }
.exp { position: absolute; left: -4px; top: 4px; width: 9px; height: 9px; border: 1px solid #777; background: #fff; font: 9px/6px "Liberation Mono", monospace; }

.sash { flex: none; width: 9px; display: flex; flex-direction: column; justify-content: center; align-items: center; gap: 104px; }
.grab, .pull { display: flex; flex-direction: column; align-items: center; justify-content: center; gap: 5px; }
.grab { width: 6px; height: 105px; background: radial-gradient(circle, #999 1px, transparent 1px) 0 0 / 3px 4px, #dedbd5; }
.grab b, .pull b { width: 5px; height: 5px; border: solid #10109c; border-width: 0 0 2px 2px; transform: rotate(45deg); }
.split { flex: none; width: 7px; display: flex; align-items: center; border: solid #808080; border-width: 0 1px; background: linear-gradient(#808080, #808080) 2px 0 / 1px 100% no-repeat; }
.pull { justify-content: space-between; width: 5px; height: 105px; background: repeating-linear-gradient(#226 0 1px, #dde 1px 3px) 2px 0 / 1px 100% no-repeat, #dcdce8; }
.pull b { border-width: 2px 2px 0 0; }

.view { flex: 1; min-width: 0; background: linear-gradient(#a6a497, #c3c0b1 50%, #e3e1d4); }
.view svg { width: 100%; height: 100%; }
.tags { font: 31px "Liberation Mono", monospace; fill: #b87435; }
.tags.dark { font-size: 30px; fill: #6b6250; }

.side { flex: none; width: 47px; display: flex; flex-direction: column; gap: 1px; }
.narrow { width: 34px; gap: 0; }
.vgroup { padding: 0 0 2px 2px; border: 1px solid; border-color: #fff #808080 #808080 #fff; }
.vgroup::before { content: ""; display: block; height: 3px; margin: 3px 2px 3px 0; border: 1px solid; border-color: #fff #808080 #808080 #fff; }
.pair { display: flex; align-items: center; }
.fly { padding-left: 4px; }
.fly i { border: 3px solid transparent; border-left: 4px solid #000; border-right: 0; }

.log { flex: none; display: flex; justify-content: space-between; height: 96px; padding-top: 3px; border-bottom: 1px solid #808080; font-size: 11px; }
.log ul { padding: 9px 0 0 6px; }
.log li { display: flex; align-items: center; height: 16px; }
.log li::before { content: ""; width: 5px; height: 5px; margin-right: 4px; border-radius: 50%; background: #1010b0; }
.scroll { width: 16px; display: flex; flex-direction: column; }
.scroll button { height: 16px; display: grid; place-items: center; }
.up i { transform: rotate(180deg); }
.track { flex: 1; display: flex; flex-direction: column; justify-content: flex-end; background: repeating-conic-gradient(#fff 0 25%, #d4d0c8 0 50%) 0 0 / 2px 2px; }
.thumb { height: 14px; }

.status { flex: none; display: flex; align-items: center; height: 26px; padding-bottom: 1px; border-top: 1px solid #fff; border-bottom: 1px solid #fff; }
.info { flex: 1; height: 24px; margin-right: 98px; border-right: 1px solid #808080; }
.filter { position: relative; width: 178px; height: 20px; }
.filter select { width: 100%; height: 100%; padding: 0 2px; appearance: none; border: 1px solid; border-width: 2px 1px 1px 2px; border-color: #404040 #fff #fff #404040; border-radius: 0; background: #fff; color: #000; font: inherit; line-height: 16px; }
.arrow { position: absolute; top: 2px; right: 1px; width: 16px; height: 17px; display: grid; place-items: center; pointer-events: none; }
.state { width: 59px; height: 24px; margin-left: 2px; padding-left: 8px; border-left: 1px solid #808080; }
.state svg { width: 12px; height: 22px; }

.taskbar { flex: none; display: flex; align-items: center; height: 27px; padding: 0 2px; border-top: 1px solid #fff; }
.start { display: flex; align-items: center; gap: 1px; width: 50px; height: 22px; padding-left: 3px; white-space: nowrap; }
.start svg { width: 18px; height: 16px; }
.sep { width: 2px; height: 22px; margin: 0 3px; border: 1px solid; border-color: #fff #808080 #808080 #fff; }
.sep.wide { width: 3px; height: 18px; margin: 0 3px 0 0; }
.task { display: flex; align-items: center; gap: 3px; width: 160px; height: 22px; margin-right: 3px; padding: 0 2px 0 3px; font: 11px/16px "Liberation Sans", "Noto Sans CJK SC", sans-serif; text-align: left; }
.task svg { width: 16px; height: 16px; }
.task span { white-space: nowrap; }
.cur { background: repeating-conic-gradient(#fff 0 25%, #dedad4 0 50%) 0 0 / 2px 2px; border-color: #404040 #fff #fff #404040; box-shadow: inset 1px 1px #808080; }
.tray { display: flex; align-items: center; gap: 2px; height: 22px; margin-left: auto; padding: 0 12px 0 4px; border: 1px solid; border-color: #808080 #fff #fff #808080; }
.tray svg { width: 16px; height: 16px; }
.lang { width: 16px; background: #0a246a; color: #fff; font: 11px/16px "Liberation Sans", sans-serif; text-align: center; }
.tray time { margin-left: 12px; font: 11px/16px "Open Sans", sans-serif; }

.mark { position: absolute; right: 8px; bottom: 0; width: 203px; height: 67px; display: flex; background: rgba(255, 255, 255, .25); opacity: .75; pointer-events: none; }
.mark svg { width: 69px; height: 66px; }
.mark strong { display: block; margin-top: 3px; font: bold 29px/36px "Noto Sans CJK SC", sans-serif; color: #4f9e70; white-space: nowrap; }
.mark span { display: block; font: 14px/18px "Liberation Sans", sans-serif; color: #9bb3a4; opacity: .6; white-space: nowrap; }
```
